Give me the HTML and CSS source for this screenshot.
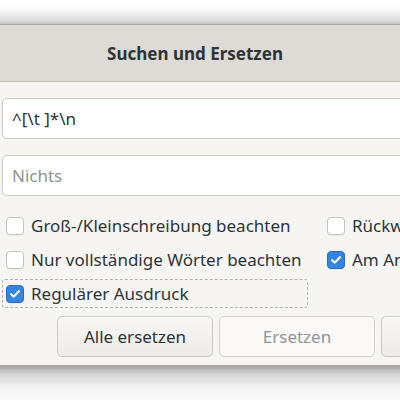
FILE: index.html
```html
<!DOCTYPE html>
<html>
<head>
<meta charset="utf-8">
<link rel="stylesheet" href="styles.css">
</head>
<body>
<div class="shadow-top"></div>
<div class="window">
  <div class="header"><span class="title">Suchen und Ersetzen</span></div>
  <div class="content">
    <div class="entry">^[\t ]*\n</div>
    <div class="entry placeholder">Nichts</div>
    <div class="options">
      <label class="check"><span class="box"></span><span class="label">Groß-/Kleinschreibung beachten</span></label>
      <label class="check"><span class="box"></span><span class="label">Rückwärts suchen</span></label>
      <label class="check"><span class="box"></span><span class="label">Nur vollständige Wörter beachten</span></label>
      <label class="check"><span class="box checked"><svg viewBox="0 0 16 16" width="14" height="14"><path d="M3.5 8.2 L6.6 11 L12.5 4.8" fill="none" stroke="#fff" stroke-width="2.4" stroke-linecap="round" stroke-linejoin="round"/></svg></span><span class="label">Am Anfang fortsetzen</span></label>
      <label class="check focus"><span class="box checked"><svg viewBox="0 0 16 16" width="14" height="14"><path d="M3.5 8.2 L6.6 11 L12.5 4.8" fill="none" stroke="#fff" stroke-width="2.4" stroke-linecap="round" stroke-linejoin="round"/></svg></span><span class="label">Regulärer Ausdruck</span></label>
    </div>
    <div class="buttons">
      <div class="btn">Alle ersetzen</div>
      <div class="btn disabled">Ersetzen</div>
      <div class="btn">Suchen</div>
    </div>
  </div>
</div>
<div class="shadow-bottom"></div>
</body>
</html>
```
FILE: styles.css
```css
html, body {
  margin: 0;
  padding: 0;
  width: 400px;
  height: 400px;
  overflow: hidden;
  background: #ffffff;
  font-family: "Noto Sans", "Open Sans", sans-serif;
  color: #2e3436;
}
.shadow-top {
  height: 24px;
  background: linear-gradient(to bottom, #ffffff 0%, #fbfbfb 35%, #dcdcdc 85%, #c4c4c4 100%);
}
.window {
  width: 400px;
  overflow: hidden;
  background: #f6f5f4;
  border-top: 1px solid #a9a7a5;
  border-bottom: 1px solid #a9a7a5;
}
.header {
  height: 56px;
  background: #dedad6;
  border-bottom: 1px solid #c3bfbb;
  display: flex;
  align-items: center;
  justify-content: center;
  padding-right: 10px;
}
.title {
  font-weight: bold;
  font-size: 17px;
  color: #2e3436;
}
.content {
  padding: 16px 0 8px 2px;
  display: flex;
  flex-direction: column;
}
.entry {
  width: 420px;
  height: 41px;
  box-sizing: border-box;
  border: 1px solid #cdc7c2;
  border-radius: 5px;
  background: #ffffff;
  font-size: 17px;
  line-height: 39px;
  padding-left: 9px;
  margin-bottom: 16px;
}
.entry.placeholder {
  color: #8f9395;
  margin-bottom: 15px;
}
.options {
  display: grid;
  grid-template-columns: 306px 200px;
  column-gap: 15px;
  row-gap: 5px;
}
.check {
  height: 29px;
  display: flex;
  align-items: center;
  gap: 7px;
  padding-left: 4px;
  box-sizing: border-box;
  font-size: 17px;
  white-space: nowrap;
}
.check.focus {
  outline: 1px dashed #b5b2af;
  outline-offset: -1px;
  border-radius: 3px;
}
.box {
  width: 16px;
  height: 16px;
  border: 1px solid #c6c1bc;
  border-radius: 4px;
  background: #ffffff;
  box-shadow: 0 1px 1px rgba(0,0,0,0.05);
  display: flex;
  align-items: center;
  justify-content: center;
  flex: none;
}
.box.checked {
  background: #3584e4;
  border-color: #2a6cc0;
}
.buttons {
  display: flex;
  gap: 6px;
  margin-top: 8px;
  padding-left: 55px;
}
.btn {
  width: 156px;
  height: 41px;
  flex: none;
  box-sizing: border-box;
  border: 1px solid #cdc7c2;
  border-radius: 5px;
  background: linear-gradient(to bottom, #f8f7f6, #edebe9);
  display: flex;
  align-items: center;
  justify-content: center;
  font-size: 17px;
  color: #2e3436;
  box-shadow: inset 0 1px #ffffff;
}
.btn.disabled {
  background: #faf9f8;
  color: #929595;
  border-color: #d5d0cc;
  box-shadow: none;
}
.shadow-bottom {
  height: 40px;
  background: linear-gradient(to bottom, #a4a4a4 0%, #d6d6d6 20%, #f3f3f3 55%, #ffffff 100%);
}
```
